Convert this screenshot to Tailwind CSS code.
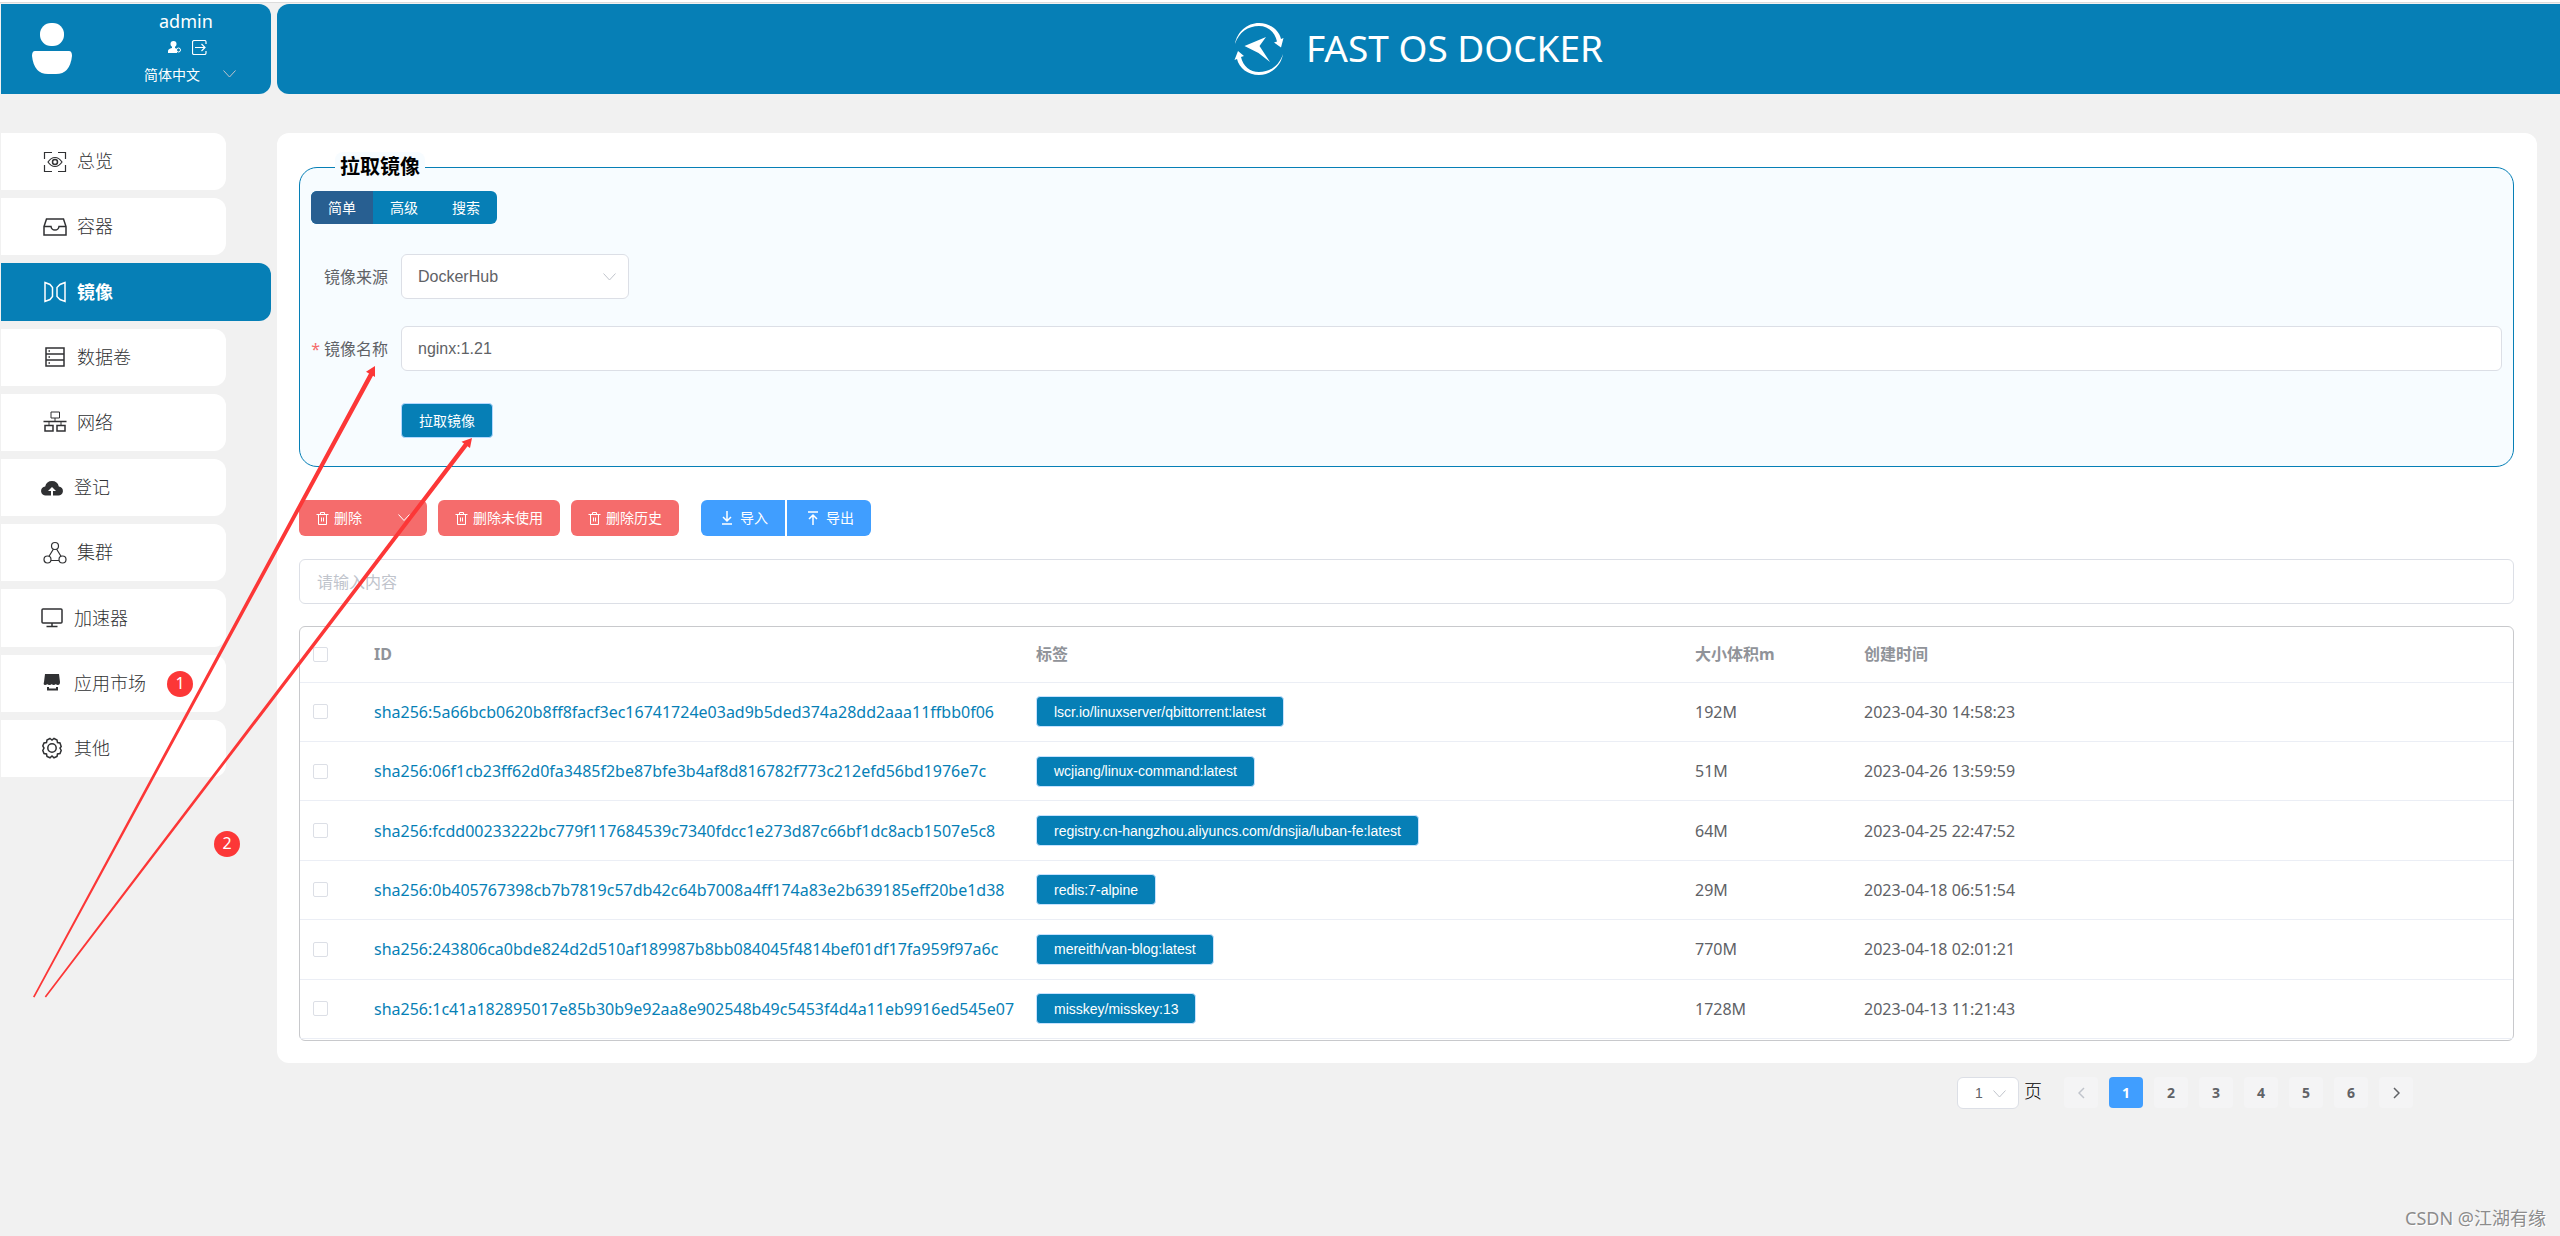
<!DOCTYPE html>
<html lang="zh-CN">
<head>
<meta charset="utf-8">
<title>FAST OS DOCKER</title>
<script src="https://cdn.jsdelivr.net/npm/@tailwindcss/browser@4"></script>
</head>
<body class="relative min-h-screen overflow-x-hidden bg-[#f1f1f1] font-['Noto_Sans','Noto_Sans_CJK_SC',sans-serif] text-base text-[#606266]">
<div class="h-[3px] border-b border-[#dcdcdc] bg-white"></div>
<div class="flex gap-[6px] pt-px pl-px">

  <aside class="w-[270px] shrink-0">
    <div class="flex h-[90px] rounded-r-xl bg-[#067fb6] text-white">
      <svg class="mt-[18px] ml-[30px] h-[54px] w-[42px]" viewBox="0 0 42 54" fill="currentColor" aria-hidden="true"><rect x="9" y="1" width="24" height="23" rx="11"/><path d="M4 29h34q3 0 3 5-2 18-16 18h-8Q3 52 1 34q0-5 3-5z"/></svg>
      <div class="ml-[71px] w-[92px]">
        <div class="mt-[3px] h-[28px] pl-[15px] text-[18px] leading-[28px]">admin</div>
        <div class="mt-[4px] flex h-4 w-full items-center gap-[10px] pl-[24px]">
          <a href="#" aria-label="账号"><svg class="h-[14px] w-[14px]" viewBox="0 0 14 14"><circle cx="5.500" cy="4" r="3" fill="#fff"/><path d="M4 6h3v2l2 1v4H0v-2q0-2 4-3z" fill="#fff"/><circle cx="10.500" cy="10" r="2" fill="none" stroke="#fff"/></svg></a>
          <a href="#" aria-label="退出"><svg class="h-[15px] w-[15px]" viewBox="0 0 15 15" fill="none" stroke="#fff" stroke-width="1.200"><path d="M14 4V2q0-1.500-1.500-1.500h-10Q.5.500.5 2v11q0 1.500 1.500 1.500h10.500Q14 14.500 14 13v-2M3 7.500h10M9.500 4l3.500 3.500L9.500 11"/></svg></a>
        </div>
        <div class="relative mt-[7px] w-full">
          <select aria-label="语言" class="h-6 w-full appearance-none bg-transparent text-sm leading-6 text-white"><option>简体中文</option></select>
          <svg class="pointer-events-none absolute top-[8px] right-0 h-[8px] w-[13px]" viewBox="0 0 13 8" fill="none" stroke="#c0c4cc"><path d="M.5.500l6 6.500 6-6.500"/></svg>
        </div>
      </div>
    </div>

    <nav class="mt-[39px] flex h-[644px] flex-col gap-2 text-[18px] text-[#303133]">
      <a href="#" class="flex w-[225px] flex-1 items-center gap-[10px] rounded-r-xl bg-white pl-[42px] font-light">
        <svg class="h-6 w-6" viewBox="0 0 24 24" fill="none" stroke="currentColor" stroke-width="1.200"><path d="M1.500 9V2.500H9M15 2.500h7.500V9M1.500 15v6.500H9M15 21.500h7.500V15M5 12q3-4.500 7-4.500t7 4.500q-3 4.500-7 4.500T5 12z"/><circle cx="12" cy="12" r="2.500" stroke-width="1.500"/></svg>总览</a>
      <a href="#" class="flex w-[225px] flex-1 items-center gap-[10px] rounded-r-xl bg-white pl-[42px] font-light">
        <svg class="h-6 w-6" viewBox="0 0 24 24" fill="none" stroke="currentColor" stroke-width="1.500"><path d="M1 11.500 3.500 4h17L23 11.500V20H1zM1 11.500h7q.5 3.500 4 3.500t4-3.500h7"/></svg>容器</a>
      <a href="#" class="flex w-[270px] flex-1 items-center gap-[10px] rounded-r-xl bg-[#067fb6] pl-[42px] font-bold text-white">
        <svg class="h-6 w-6" viewBox="0 0 24 24" fill="none" stroke="currentColor" stroke-width="1.500"><path d="M2 2.500l5 2 2.500 3v9l-2.500 3-5 2zM22 2.500l-5 2-3 3v9l3 3 5 2z"/></svg>镜像</a>
      <a href="#" class="flex w-[225px] flex-1 items-center gap-[10px] rounded-r-xl bg-white pl-[42px] font-light">
        <svg class="h-6 w-6" viewBox="0 0 24 24" fill="none" stroke="currentColor" stroke-width="1.500"><path d="M3 3h18v18H3zM3 9h18M3 15h18M5.500 6h1.500M5.500 12h1.500M5.500 18h1.500"/></svg>数据卷</a>
      <a href="#" class="flex w-[225px] flex-1 items-center gap-[10px] rounded-r-xl bg-white pl-[42px] font-light">
        <svg class="h-6 w-6" viewBox="0 0 24 24" fill="none" stroke="currentColor"><path d="M8 2h8.500v6H8zM12 8v3M6 12v3M18 12v3"/><path d="M.5 11.500h23M2 15.500h8V21H2zM14 15.500h8V21h-8z" stroke-width="1.500"/></svg>网络</a>
      <a href="#" class="flex w-[225px] flex-1 items-center gap-[11px] rounded-r-xl bg-white pl-[40px] font-light">
        <svg class="h-[22px] w-[22px]" viewBox="0 0 22 22" fill="currentColor"><path d="M5 18.500a4.500 4.500 0 0 1-.8-9A7 7 0 0 1 11 4a7 7 0 0 1 6.800 5.500 4.500 4.500 0 0 1-.8 9h-5V14h3L11 10l-4 4h3v4.500z"/></svg>登记</a>
      <a href="#" class="flex w-[225px] flex-1 items-center gap-[10px] rounded-r-xl bg-white pl-[42px] font-light">
        <svg class="h-6 w-6" viewBox="0 0 24 24" fill="none" stroke="currentColor" stroke-width="1.200"><circle cx="12" cy="5" r="3.500"/><circle cx="4.500" cy="18.500" r="3.500"/><circle cx="19.500" cy="18.500" r="3.500"/><path d="M10.500 8 6 15.300M13.500 8l4.500 7.300M8 19.500h8"/></svg>集群</a>
      <a href="#" class="flex w-[225px] flex-1 items-center gap-[11px] rounded-r-xl bg-white pl-[40px] font-light">
        <svg class="h-[22px] w-[22px]" viewBox="0 0 22 22" fill="none" stroke="currentColor" stroke-width="1.500"><rect x="1" y="2" width="20" height="14" rx="1"/><path d="M11 16v3.500M5.500 19.500h11"/></svg>加速器</a>
      <a href="#" class="flex w-[225px] flex-1 items-center gap-[11px] rounded-r-xl bg-white pl-[40px] font-light">
        <svg class="h-[22px] w-[22px]" viewBox="0 0 22 22" fill="currentColor"><path d="M4 2h14l1 8q0 3-2 3-2 0-2-1-1 1-2.500 1T11 12q-1 1-2.500 1T6 12q0 1-2 1-2 0-1-3zM6 15h2v1.500h7V15h2v3.500H6z"/></svg>应用市场</a>
      <a href="#" class="flex w-[225px] flex-1 items-center gap-[11px] rounded-r-xl bg-white pl-[40px] font-light">
        <svg class="h-[22px] w-[22px]" viewBox="0 0 22 22" fill="none" stroke="currentColor" stroke-width="1.500"><path d="M9 1.500 11 3l2-1.500 3 1.500.5 2.500 2.500.5 1.200 3.500L19 11l1.200 2.500L19 16.500l-2.500.5-.5 2.500-3 1.300L11 19l-2 1.800-3-1.300-.5-2.500-2.500-.5L1.800 13.500 3 11 1.800 9 3 6l2.500-.5L6 3z"/><circle cx="11" cy="11" r="4.200"/></svg>其他</a>
    </nav>
  </aside>

  <div class="min-w-0 flex-1">
    <header class="flex h-[90px] items-center justify-center gap-[22px] rounded-l-xl bg-[#067fb6] text-white">
      <svg class="h-[54px] w-[50px]" viewBox="0 0 50 54" fill="currentColor" aria-hidden="true"><path d="M1 22C3 10 13 1 25 1c11 0 20 7 22 16l2.500-1L47 25.500l-7-5 3-1C41 10 34 4 25 4 14 4 5 10 1 22zM49 32C47 44 37 53 25 53 14 53 5 46 3 37L.5 38 4 29l6 5-3 1c2 9 9 15 18 15 11 0 20-6 24-18z"/><path d="M32 15 10.500 24l14 7L36 40 25.500 24z"/></svg>
      <h1 class="pb-[2px] text-[37px] leading-[50px]">FAST OS DOCKER</h1>
    </header>

    <main class="mt-[39px] mr-[23px] rounded-xl bg-white pt-[19px] pr-[23px] pb-[22px] pl-[22px]">
      <fieldset class="rounded-[18px] border border-[#067fb6] bg-[#f7fcff] px-[11px] pb-[28px]">
        <legend class="ml-6 rounded-lg bg-[#f7fcff] px-[5px] text-xl leading-[30px] font-bold text-black">拉取镜像</legend>
        <div class="mt-[9px] flex h-[33px] w-[186px] overflow-hidden rounded-md bg-[#067fb6] text-sm text-white">
          <button class="flex-1 bg-[#285f91]">简单</button>
          <button class="flex-1">高级</button>
          <button class="flex-1">搜索</button>
        </div>
        <div class="mt-[30px] flex items-center">
          <label for="source" class="w-[90px] pr-[13px] text-right leading-6">镜像来源</label>
          <div class="relative w-[228px]">
            <select id="source" class="h-[45px] w-full appearance-none rounded-md border border-[#dcdfe6] bg-white px-4 font-['Liberation_Sans',sans-serif] text-base"><option>DockerHub</option></select>
            <svg class="pointer-events-none absolute top-[19px] right-[13px] h-[8px] w-[13px]" viewBox="0 0 13 8" fill="none" stroke="#c0c4cc"><path d="M.5.500l6 6.500 6-6.500"/></svg>
          </div>
        </div>
        <div class="mt-[27px] flex items-center">
          <label for="image" class="w-[90px] pr-[13px] text-right leading-6"><span class="mr-1 text-[#f56c6c]">*</span>镜像名称</label>
          <input id="image" value="nginx:1.21" class="h-[45px] min-w-0 flex-1 rounded-md border border-[#dcdfe6] bg-white px-4 font-['Liberation_Sans',sans-serif] text-base">
        </div>
        <button class="mt-[32px] ml-[90px] block h-[35px] rounded border border-[#b3d8ff] bg-[#067fb6] px-[17px] text-sm text-white">拉取镜像</button>
      </fieldset>

      <div class="mt-[33px] flex h-[36px] text-sm text-white">
        <button class="flex w-[128px] items-center gap-[5px] rounded-md bg-[#f56c6c] px-[17px]">
          <svg class="h-[13px] w-[13px]" viewBox="0 0 13 13" fill="none" stroke="currentColor"><path d="M.5 2.500h12M4.500 2V.5h4V2M2.500 2.500v10h8v-10M5.500 5.500v4M7.500 5.500v4"/></svg>删除
          <svg class="ml-auto h-[8px] w-[12px]" viewBox="0 0 12 8" fill="none" stroke="currentColor"><path d="M.5.500 6 6.500 11.500.500"/></svg>
        </button>
        <button class="ml-[11px] flex items-center gap-[5px] rounded-md bg-[#f56c6c] px-[17px]">
          <svg class="h-[13px] w-[13px]" viewBox="0 0 13 13" fill="none" stroke="currentColor"><path d="M.5 2.500h12M4.500 2V.5h4V2M2.500 2.500v10h8v-10M5.500 5.500v4M7.500 5.500v4"/></svg>删除未使用</button>
        <button class="ml-[11px] flex items-center gap-[5px] rounded-md bg-[#f56c6c] px-[17px]">
          <svg class="h-[13px] w-[13px]" viewBox="0 0 13 13" fill="none" stroke="currentColor"><path d="M.5 2.500h12M4.500 2V.5h4V2M2.500 2.500v10h8v-10M5.500 5.500v4M7.500 5.500v4"/></svg>删除历史</button>
        <button class="ml-[22px] flex w-[84px] items-center gap-[7px] rounded-l-md bg-[#409eff] pl-[20px]">
          <svg class="h-[14px] w-[12px]" viewBox="0 0 12 14" fill="none" stroke="currentColor" stroke-width="1.500"><path d="M1 13h10M6 0v10M2 6l4 4 4-4"/></svg>导入</button>
        <button class="ml-[2px] flex w-[84px] items-center gap-[7px] rounded-r-md bg-[#409eff] pl-[20px]">
          <svg class="h-[14px] w-[12px]" viewBox="0 0 12 14" fill="none" stroke="currentColor" stroke-width="1.500"><path d="M1 1h10M6 14V4M2 8l4-4 4 4"/></svg>导出</button>
      </div>

      <input aria-label="搜索" placeholder="请输入内容" class="mt-[23px] block h-[45px] w-full rounded-md border border-[#dcdfe6] bg-white px-[17px] placeholder:text-[#c0c4cc]">

      <div class="mt-[22px] rounded-md border border-[#c8c9cc] pb-px">
        <table class="h-[412px] w-full table-fixed text-left">
          <colgroup><col class="w-[58px]"><col class="w-[662px]"><col class="w-[659px]"><col class="w-[169px]"><col></colgroup>
          <thead>
            <tr class="h-[55px] border-b border-[#ebeef5] font-bold text-[#909399]">
              <th class="pl-[13px]"><input type="checkbox" aria-label="全选" class="block h-[15px] w-[15px] appearance-none rounded-[2px] border border-[#dcdfe6] bg-white"></th>
              <th class="px-4">ID</th><th class="px-4">标签</th><th class="px-4">大小体积m</th><th class="px-4">创建时间</th>
            </tr>
          </thead>
          <tbody>
            <tr class="border-b border-[#ebeef5]">
              <td class="pl-[13px]"><input type="checkbox" aria-label="选择" class="block h-[15px] w-[15px] appearance-none rounded-[2px] border border-[#dcdfe6] bg-white"></td>
              <td class="px-4 whitespace-nowrap"><a href="#" class="text-[#067fb6]">sha256:5a66bcb0620b8ff8facf3ec16741724e03ad9b5ded374a28dd2aaa11ffbb0f06</a></td>
              <td class="px-4"><button class="block h-[31px] rounded border border-[#c6e2ff] bg-[#067fb6] px-[17px] font-['Liberation_Sans',sans-serif] text-sm text-white">lscr.io/linuxserver/qbittorrent:latest</button></td>
              <td class="px-4">192M</td><td class="px-4">2023-04-30 14:58:23</td>
            </tr>
            <tr class="border-b border-[#ebeef5]">
              <td class="pl-[13px]"><input type="checkbox" aria-label="选择" class="block h-[15px] w-[15px] appearance-none rounded-[2px] border border-[#dcdfe6] bg-white"></td>
              <td class="px-4 whitespace-nowrap"><a href="#" class="text-[#067fb6]">sha256:06f1cb23ff62d0fa3485f2be87bfe3b4af8d816782f773c212efd56bd1976e7c</a></td>
              <td class="px-4"><button class="block h-[31px] rounded border border-[#c6e2ff] bg-[#067fb6] px-[17px] font-['Liberation_Sans',sans-serif] text-sm text-white">wcjiang/linux-command:latest</button></td>
              <td class="px-4">51M</td><td class="px-4">2023-04-26 13:59:59</td>
            </tr>
            <tr class="border-b border-[#ebeef5]">
              <td class="pl-[13px]"><input type="checkbox" aria-label="选择" class="block h-[15px] w-[15px] appearance-none rounded-[2px] border border-[#dcdfe6] bg-white"></td>
              <td class="px-4 whitespace-nowrap"><a href="#" class="text-[#067fb6]">sha256:fcdd00233222bc779f117684539c7340fdcc1e273d87c66bf1dc8acb1507e5c8</a></td>
              <td class="px-4"><button class="block h-[31px] rounded border border-[#c6e2ff] bg-[#067fb6] px-[17px] font-['Liberation_Sans',sans-serif] text-sm text-white">registry.cn-hangzhou.aliyuncs.com/dnsjia/luban-fe:latest</button></td>
              <td class="px-4">64M</td><td class="px-4">2023-04-25 22:47:52</td>
            </tr>
            <tr class="border-b border-[#ebeef5]">
              <td class="pl-[13px]"><input type="checkbox" aria-label="选择" class="block h-[15px] w-[15px] appearance-none rounded-[2px] border border-[#dcdfe6] bg-white"></td>
              <td class="px-4 whitespace-nowrap"><a href="#" class="text-[#067fb6]">sha256:0b405767398cb7b7819c57db42c64b7008a4ff174a83e2b639185eff20be1d38</a></td>
              <td class="px-4"><button class="block h-[31px] rounded border border-[#c6e2ff] bg-[#067fb6] px-[17px] font-['Liberation_Sans',sans-serif] text-sm text-white">redis:7-alpine</button></td>
              <td class="px-4">29M</td><td class="px-4">2023-04-18 06:51:54</td>
            </tr>
            <tr class="border-b border-[#ebeef5]">
              <td class="pl-[13px]"><input type="checkbox" aria-label="选择" class="block h-[15px] w-[15px] appearance-none rounded-[2px] border border-[#dcdfe6] bg-white"></td>
              <td class="px-4 whitespace-nowrap"><a href="#" class="text-[#067fb6]">sha256:243806ca0bde824d2d510af189987b8bb084045f4814bef01df17fa959f97a6c</a></td>
              <td class="px-4"><button class="block h-[31px] rounded border border-[#c6e2ff] bg-[#067fb6] px-[17px] font-['Liberation_Sans',sans-serif] text-sm text-white">mereith/van-blog:latest</button></td>
              <td class="px-4">770M</td><td class="px-4">2023-04-18 02:01:21</td>
            </tr>
            <tr class="border-b border-[#ebeef5]">
              <td class="pl-[13px]"><input type="checkbox" aria-label="选择" class="block h-[15px] w-[15px] appearance-none rounded-[2px] border border-[#dcdfe6] bg-white"></td>
              <td class="px-4 whitespace-nowrap"><a href="#" class="text-[#067fb6]">sha256:1c41a182895017e85b30b9e92aa8e902548b49c5453f4d4a11eb9916ed545e07</a></td>
              <td class="px-4"><button class="block h-[31px] rounded border border-[#c6e2ff] bg-[#067fb6] px-[17px] font-['Liberation_Sans',sans-serif] text-sm text-white">misskey/misskey:13</button></td>
              <td class="px-4">1728M</td><td class="px-4">2023-04-13 11:21:43</td>
            </tr>
          </tbody>
        </table>
      </div>
    </main>

    <div class="mt-[14px] mr-[147px] flex h-[32px] items-start justify-end">
      <div class="relative w-[62px]">
        <select id="page" class="h-[32px] w-full appearance-none rounded-md border border-[#dcdfe6] bg-white pl-[17px] font-['Liberation_Sans',sans-serif] text-sm"><option>1</option></select>
        <svg class="pointer-events-none absolute top-[13px] right-[13px] h-[8px] w-[13px]" viewBox="0 0 13 8" fill="none" stroke="#c0c4cc"><path d="M.5.500l6 6.500 6-6.500"/></svg>
      </div>
      <label for="page" class="ml-[5px] text-[18px] leading-7 font-light text-black">页</label>
      <nav class="ml-[22px] flex gap-[11px] text-sm font-bold">
        <button aria-label="上一页" class="flex h-[31px] w-[34px] items-center justify-center rounded-sm bg-[#f4f4f5] text-[#c0c4cc]"><svg class="h-[12px] w-[7px]" viewBox="0 0 7 12" fill="none" stroke="currentColor" stroke-width="1.500"><path d="M6 1 1 6l5 5"/></svg></button>
        <button class="h-[31px] w-[34px] rounded-sm bg-[#409eff] text-white">1</button>
        <button class="h-[31px] w-[34px] rounded-sm bg-[#f4f4f5]">2</button>
        <button class="h-[31px] w-[34px] rounded-sm bg-[#f4f4f5]">3</button>
        <button class="h-[31px] w-[34px] rounded-sm bg-[#f4f4f5]">4</button>
        <button class="h-[31px] w-[34px] rounded-sm bg-[#f4f4f5]">5</button>
        <button class="h-[31px] w-[34px] rounded-sm bg-[#f4f4f5]">6</button>
        <button aria-label="下一页" class="flex h-[31px] w-[34px] items-center justify-center rounded-sm bg-[#f4f4f5]"><svg class="h-[12px] w-[7px]" viewBox="0 0 7 12" fill="none" stroke="currentColor" stroke-width="1.500"><path d="M1 1l5 5-5 5"/></svg></button>
      </nav>
    </div>
  </div>
</div>

<!-- step markers and arrows laid over the page -->
<svg class="pointer-events-none absolute top-0 left-0 h-[1000px] w-[500px]" viewBox="0 0 500 1000" fill="#fc3737" aria-hidden="true">
  <path d="M375 366v11l-2-1.300L34.500 997.500l-1.500-.7L369 373.500l-3-1.800z"/>
  <path d="M472 438l-2 10-2.500-1.800L46 997.500l-1.300-1L464 443.500l-2.500-1.800z"/>
</svg>
<span class="absolute top-[671px] left-[167px] h-[26px] w-[26px] rounded-full bg-[#fc3737] text-center leading-[25px] text-white">1</span>
<span class="absolute top-[831px] left-[214px] h-[26px] w-[26px] rounded-full bg-[#fc3737] text-center leading-[25px] text-white">2</span>
<div class="absolute right-[14px] bottom-[6px] text-[18px] leading-6 text-[#8c8c8c] [text-shadow:1px_1px_0_#fff]">CSDN @江湖有缘</div>
</body>
</html>
